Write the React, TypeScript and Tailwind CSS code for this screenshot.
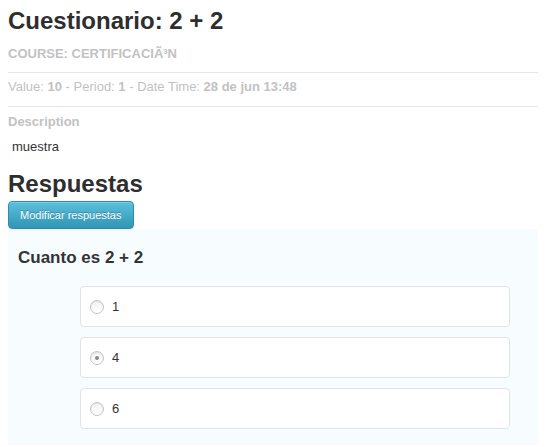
import React from "react";

function Radio({ checked }: { checked?: boolean }) {
  return (
    <span className="inline-flex h-[14px] w-[14px] items-center justify-center rounded-full border border-[#c4c4c4] bg-gradient-to-b from-[#f2f2f2] to-[#ffffff] shadow-[inset_0_1px_1px_rgba(0,0,0,0.08)]">
      {checked && <span className="h-[4px] w-[4px] rounded-full bg-[#8a8a8a]" />}
    </span>
  );
}

export default function App() {
  const options = [
    { label: "1", checked: false },
    { label: "4", checked: true },
    { label: "6", checked: false },
  ];
  return (
    <div className="min-h-[447px] bg-white px-[8px] font-['Liberation_Sans',Arial,sans-serif] text-[#333]">
      <h1 className="pt-[5px] text-[24px] font-bold leading-[32px] text-[#2e2e2e]">Cuestionario: 2 + 2</h1>
      <div className="mt-[8px] text-[13px] font-bold leading-[18px] text-[#c2c2c2]">COURSE: CERTIFICACIÃ³N</div>
      <hr className="mt-[9px] border-t border-[#e6e6e6] mr-[1px]" />
      <div className="mt-[5px] text-[13px] leading-[18px] text-[#c2c2c2]">
        Value: <b>10</b> - Period: <b>1</b> - Date Time: <b>28 de jun 13:48</b>
      </div>
      <hr className="mt-[10px] border-t border-[#e6e6e6] mr-[1px]" />
      <div className="mt-[6px] text-[13px] font-bold leading-[18px] text-[#c2c2c2]">Description</div>
      <div className="mt-[7px] pl-[4px] text-[13px] leading-[18px] text-[#333]">muestra</div>
      <h2 className="mt-[14px] text-[24px] font-bold leading-[28px] text-[#2e2e2e]">Respuestas</h2>
      <button className="mt-[3px] rounded-[4px] border border-[#2a8fae] bg-gradient-to-b from-[#5bc0de] to-[#2f96b4] px-[11px] py-[5px] text-[11px] leading-[16px] text-white shadow-[inset_0_1px_0_rgba(255,255,255,0.2),0_1px_2px_rgba(0,0,0,0.05)] [text-shadow:0_-1px_0_rgba(0,0,0,0.25)]">
        Modificar respuestas
      </button>
      <div className="mr-[1px] bg-[#f7fcfe] px-[10px] pb-[16px] pt-[17px]">
        <h3 className="text-[17px] font-bold leading-[24px] text-[#333]">Cuanto es 2 + 2</h3>
        <div className="mt-[16px] flex flex-col gap-[10px] pl-[62px] pr-[18px]">
          {options.map((o) => (
            <div
              key={o.label}
              className="flex h-[41px] items-center gap-[8px] rounded-[4px] border border-[#e3e3e3] bg-white px-[9px]"
            >
              <Radio checked={o.checked} />
              <span className="text-[13px] text-[#333]">{o.label}</span>
            </div>
          ))}
        </div>
      </div>
    </div>
  );
}
